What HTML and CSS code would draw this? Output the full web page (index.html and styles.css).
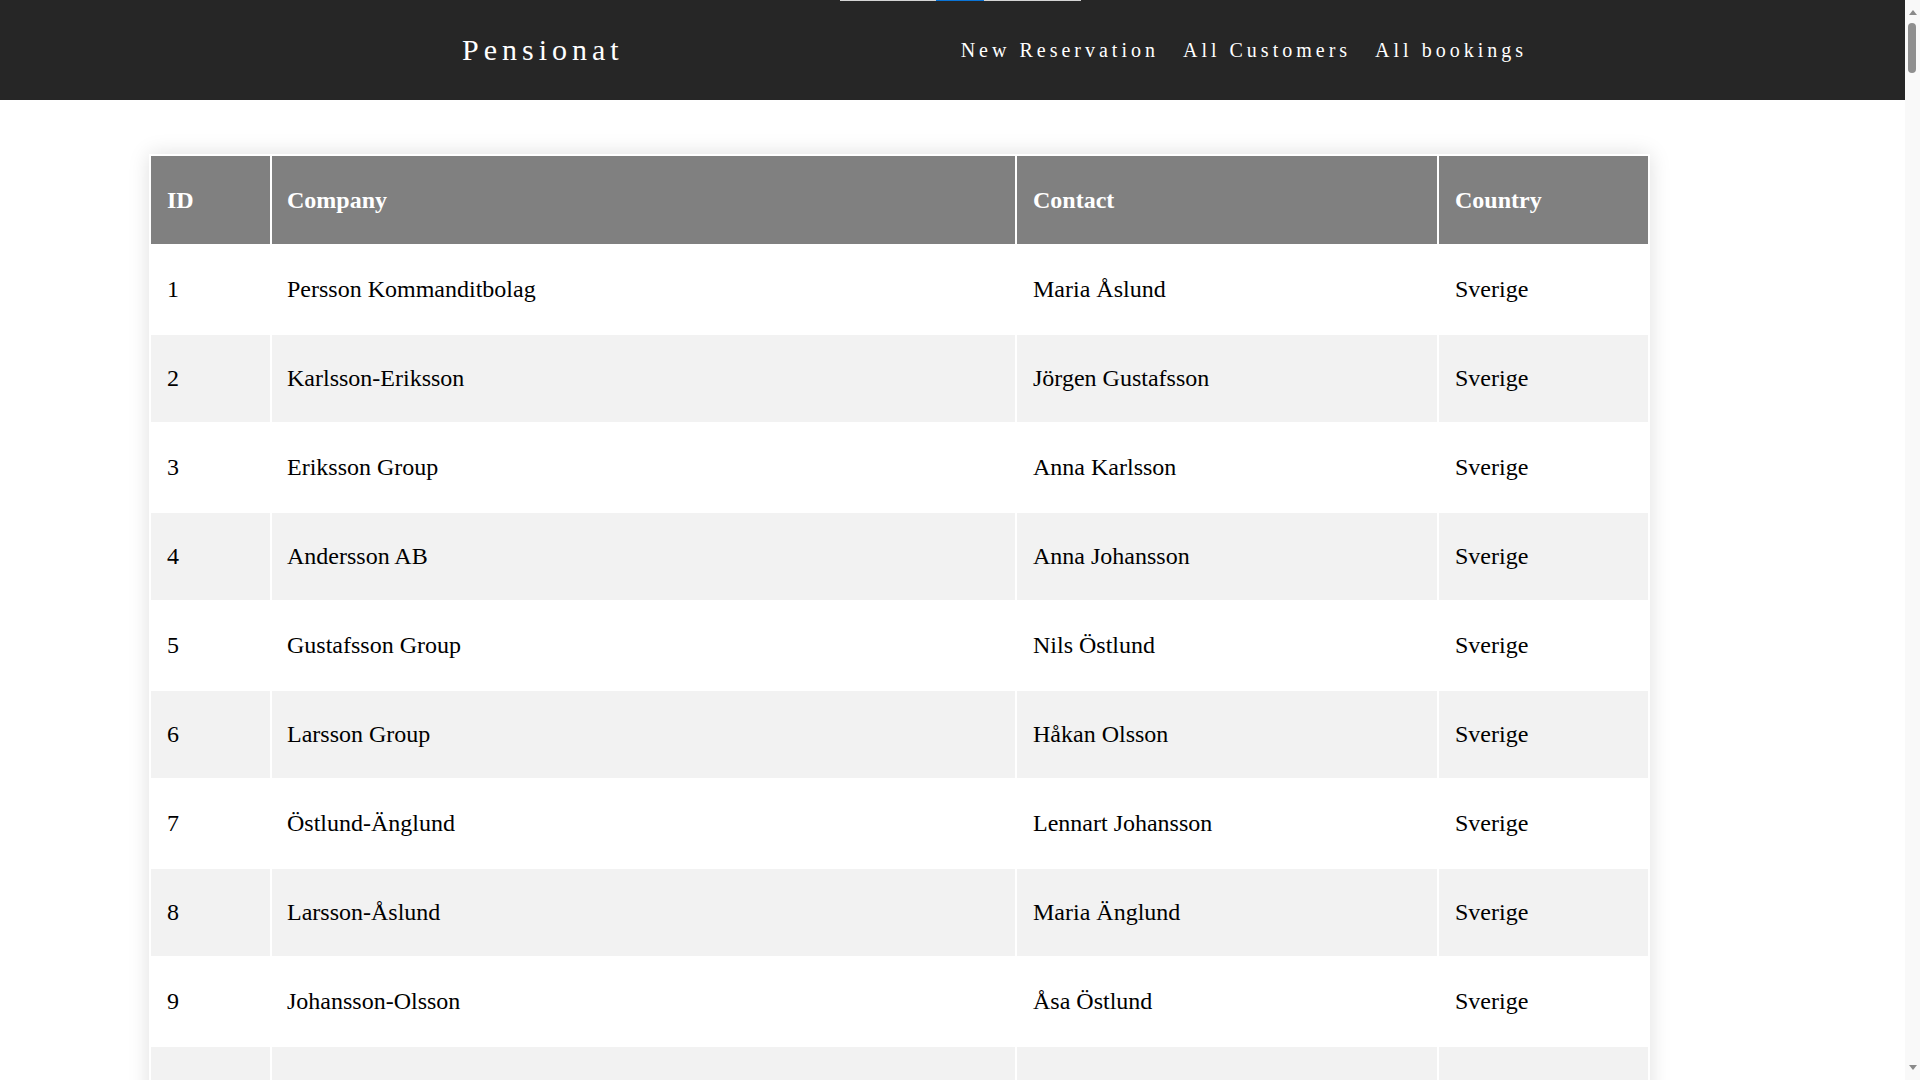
FILE: index.html
```html
<!DOCTYPE html>
<html lang="sv">
<head>
<meta charset="utf-8">
<title>Pensionat</title>
<link rel="stylesheet" href="styles.css">
</head>
<body>
<header class="site-header">
  <div class="load-bar"><span class="load-bar-fill"></span></div>
  <div class="header-inner">
    <a class="brand" href="#">Pensionat</a>
    <nav class="main-nav">
      <a href="#">New Reservation</a>
      <a href="#">All Customers</a>
      <a href="#">All bookings</a>
    </nav>
  </div>
</header>
<main class="content">
  <table class="customers">
    <colgroup>
      <col class="c-id"><col class="c-company"><col class="c-contact"><col class="c-country">
    </colgroup>
    <thead>
      <tr><th>ID</th><th class="company">Company</th><th>Contact</th><th>Country</th></tr>
    </thead>
    <tbody>
      <tr><td>1</td><td class="company">Persson Kommanditbolag</td><td>Maria Åslund</td><td>Sverige</td></tr>
      <tr><td>2</td><td class="company">Karlsson-Eriksson</td><td>Jörgen Gustafsson</td><td>Sverige</td></tr>
      <tr><td>3</td><td class="company">Eriksson Group</td><td>Anna Karlsson</td><td>Sverige</td></tr>
      <tr><td>4</td><td class="company">Andersson AB</td><td>Anna Johansson</td><td>Sverige</td></tr>
      <tr><td>5</td><td class="company">Gustafsson Group</td><td>Nils Östlund</td><td>Sverige</td></tr>
      <tr><td>6</td><td class="company">Larsson Group</td><td>Håkan Olsson</td><td>Sverige</td></tr>
      <tr><td>7</td><td class="company">Östlund-Änglund</td><td>Lennart Johansson</td><td>Sverige</td></tr>
      <tr><td>8</td><td class="company">Larsson-Åslund</td><td>Maria Änglund</td><td>Sverige</td></tr>
      <tr><td>9</td><td class="company">Johansson-Olsson</td><td>Åsa Östlund</td><td>Sverige</td></tr>
      <tr class="empty-row"><td></td><td></td><td></td><td></td></tr>
    </tbody>
  </table>
</main>
<div class="scrollbar" aria-hidden="true">
  <span class="sb-arrow sb-up"></span>
  <span class="sb-thumb"></span>
  <span class="sb-arrow sb-down"></span>
</div>
</body>
</html>
```

FILE: styles.css
```css
html, body {
  margin: 0;
  padding: 0;
  background: #ffffff;
}

body {
  font-family: "Liberation Serif", "Times New Roman", serif;
  color: #000000;
  padding-right: 15px;
}

.site-header {
  position: relative;
  background: #262626;
  height: 100px;
}

.load-bar {
  position: absolute;
  top: 0;
  left: 840px;
  width: 241px;
  height: 1px;
  background: #d4d4d4;
}

.load-bar-fill {
  position: absolute;
  top: 0;
  left: 96px;
  width: 48px;
  height: 1px;
  background: #0a74d6;
}

.header-inner {
  height: 100%;
  display: flex;
  align-items: center;
  justify-content: space-between;
  padding: 0 378px 0 462px;
}

.brand {
  color: #ffffff;
  text-decoration: none;
  font-size: 30px;
  letter-spacing: 5px;
}

.main-nav {
  display: flex;
  gap: 24px;
}

.main-nav a {
  color: #ffffff;
  text-decoration: none;
  font-size: 20px;
  letter-spacing: 4px;
}

.content {
  padding: 54px 0 60px 149px;
}

.customers {
  width: 1501px;
  border-spacing: 2px;
  background: #ffffff;
  box-shadow: 0 0 20px rgba(0, 0, 0, 0.13);
  table-layout: fixed;
}

.c-id { width: 119px; }
.c-company { width: 743px; }
.c-contact { width: 420px; }
.c-country { width: 209px; }

.customers th,
.customers td {
  text-align: left;
  font-size: 24px;
  padding: 0 15px 0 16px;
  vertical-align: middle;
}

.customers .company {
  padding-left: 15px;
}

.customers th {
  height: 88px;
  background: #808080;
  color: #ffffff;
  font-weight: bold;
}

.customers td {
  height: 87px;
}

.customers tbody tr:nth-child(even) td {
  background: #f2f2f2;
}

.scrollbar {
  position: fixed;
  top: 0;
  right: 0;
  width: 15px;
  height: 100vh;
  background: #f9f9f9;
}

.sb-arrow {
  position: absolute;
  left: 4px;
  width: 0;
  height: 0;
  border-left: 4px solid transparent;
  border-right: 4px solid transparent;
}

.sb-up {
  top: 10px;
  border-bottom: 5px solid #8a8a8a;
}

.sb-down {
  bottom: 10px;
  border-top: 5px solid #8a8a8a;
}

.sb-thumb {
  position: absolute;
  top: 23px;
  left: 3px;
  width: 8px;
  height: 50px;
  border-radius: 4px;
  background: #8f8f8f;
}
```
